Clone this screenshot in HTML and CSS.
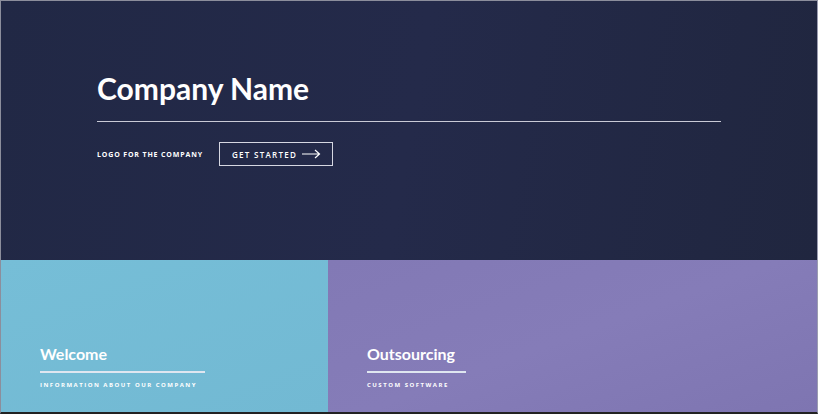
FILE: index.html
```html
<!DOCTYPE html>
<html lang="en">
<head>
    <meta charset="UTF-8">
    <meta name="viewport" content="width=device-width, initial-scale=1.0">
    <title>Company Name</title>

    <link rel="stylesheet" href="styles.css">

</head>
<body>

    <div class="frame">
        <header class="hero">
            <h1 class="hero-title">Company Name</h1>
            <div class="hero-row">
                <span class="hero-tag">LOGO FOR THE COMPANY</span>
                <a href="#" class="btn">
                    GET STARTED
                    <svg class="arrow" width="19" height="10" viewBox="0 0 19 10">
                        <path d="M0 5 H17 M13 1 L17.5 5 L13 9" fill="none" stroke="#fff" stroke-width="1.2"/>
                    </svg>
                </a>
            </div>
        </header>

        <section class="panels">
            <div class="panel panel-blue">
                <h2 class="panel-title">Welcome</h2>
                <div class="panel-line line-wide"></div>
                <p class="panel-sub">INFORMATION ABOUT OUR COMPANY</p>
            </div>
            <div class="panel panel-purple">
                <h2 class="panel-title">Outsourcing</h2>
                <div class="panel-line line-short"></div>
                <p class="panel-sub">CUSTOM SOFTWARE</p>
            </div>
        </section>
    </div>

</body>
</html>
```

FILE: styles.css
```css
body{
    margin: 0;
    font-family: "Open Sans", "Noto Sans", sans-serif;
    background-color: #1e1e1e;
    color: #fff;
}

.frame{
    width: 816px;
    height: 411px;
    border-top: 1px solid #8c8e9c;
    border-left: 1px solid #8c8e9c;
    border-right: 1px solid #9a9cb0;
    border-bottom: 2px solid #222;
    display: flex;
    flex-direction: column;
}

.hero{
    height: 259px;
    background: linear-gradient(100deg, #212845 0%, #242a4a 50%, #20263f 100%);
    padding: 0 96px;
    box-sizing: border-box;
}

.hero-title{
    margin: 0;
    padding-top: 67px;
    font-family: Lato, "Open Sans", sans-serif;
    font-size: 30px;
    font-weight: 700;
    line-height: 40px;
}

.hero-row{
    display: flex;
    align-items: center;
    margin-top: 13px;
    border-top: 1px solid #c9cad6;
    padding-top: 20px;
}

.hero-tag{
    font-size: 7px;
    font-weight: 700;
    letter-spacing: 0.85px;
    margin-right: 16px;
}

.btn{
    display: flex;
    align-items: center;
    height: 24px;
    box-sizing: border-box;
    padding: 0 11px 0 12px;
    border: 1px solid #d6d7e2;
    color: #fff;
    text-decoration: none;
    font-size: 8px;
    font-weight: 600;
    letter-spacing: 1.3px;
}

.arrow{
    margin-left: 5px;
}

.panels{
    flex: 1;
    display: flex;
}

.panel{
    padding: 83px 0 0 39px;
    box-sizing: border-box;
}

.panel-blue{
    width: 327px;
    background: linear-gradient(160deg, #76bed7 0%, #72b9d3 100%);
}

.panel-purple{
    flex: 1;
    background: linear-gradient(160deg, #8279b5 0%, #857cb8 50%, #7e75b1 100%);
}

.panel-title{
    margin: 0;
    font-family: Lato, "Open Sans", sans-serif;
    font-size: 16px;
    font-weight: 700;
    line-height: 22px;
}

.panel-line{
    height: 2px;
    background-color: #dfe6f0;
    margin-top: 6px;
}

.line-wide{
    width: 165px;
}

.line-short{
    width: 99px;
}

.panel-sub{
    margin: 8px 0 0;
    font-size: 6px;
    font-weight: 700;
    letter-spacing: 1.5px;
}
```
